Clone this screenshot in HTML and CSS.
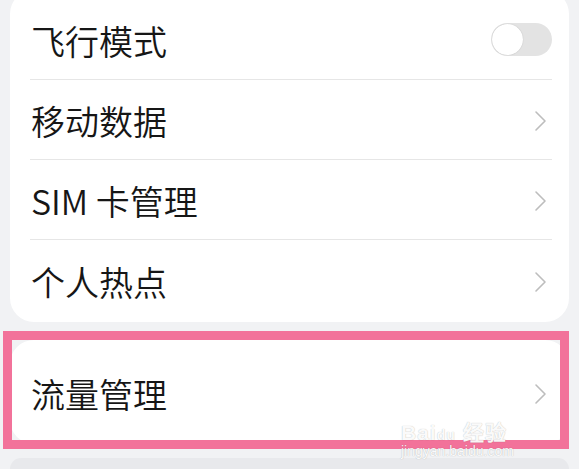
FILE: index.html
```html
<!DOCTYPE html>
<html lang="zh-CN">
<head>
    <meta charset="UTF-8">
    <meta name="viewport" content="width=device-width, initial-scale=1.0">
    <title>移动网络</title>
    <link rel="stylesheet" href="styles.css">
</head>
<body>
<div class="screen">
    <!-- 第一组设置 -->
    <div class="card card-top">
        <div class="row">
            <span class="label">飞行模式</span>
            <span class="switch"><span class="knob"></span></span>
        </div>
        <div class="row">
            <span class="label">移动数据</span>
            <svg class="arrow" viewBox="0 0 14 22"><path d="M2 2 L11 11 L2 20"/></svg>
        </div>
        <div class="row">
            <span class="label">SIM 卡管理</span>
            <svg class="arrow" viewBox="0 0 14 22"><path d="M2 2 L11 11 L2 20"/></svg>
        </div>
        <div class="row">
            <span class="label">个人热点</span>
            <svg class="arrow" viewBox="0 0 14 22"><path d="M2 2 L11 11 L2 20"/></svg>
        </div>
    </div>

    <!-- 流量管理 -->
    <div class="card card-single">
        <div class="row">
            <span class="label">流量管理</span>
            <svg class="arrow" viewBox="0 0 14 22"><path d="M2 2 L11 11 L2 20"/></svg>
        </div>
    </div>

    <div class="card card-next"></div>

    <!-- 标注框 -->
    <div class="highlight"></div>

    <div class="watermark">
        <div class="wm-logo">Bai<span class="wm-du">du</span> 经验</div>
        <div class="wm-url">jingyan.baidu.com</div>
    </div>
</div>
</body>
</html>
```

FILE: styles.css
```css
* {
    margin: 0;
    padding: 0;
    box-sizing: border-box;
}

body {
    font-family: "Noto Sans CJK SC", "Noto Sans", sans-serif;
    background-color: #f1f2f4;
    color: #161616;
    width: 579px;
    height: 469px;
    overflow: hidden;
}

.screen {
    position: relative;
    height: 469px;
    overflow: hidden;
}

/* Cartões */
.card {
    background-color: #fff;
    border-radius: 24px;
    margin: 0 10px;
}

.card-top {
    margin-top: -10px;
    padding: 10px 17px 2px 20px;
}

.card-single {
    margin-top: 18px;
    padding: 12px 17px 12px 20px;
}

.card-next {
    margin-top: 14px;
    height: 11px;
    border-radius: 24px 24px 0 0;
    background-color: #e8e9ec;
}

.row {
    height: 80px;
    display: flex;
    align-items: center;
    justify-content: space-between;
    border-bottom: 1px solid #e6e6e6;
}

.row:last-child {
    border-bottom: none;
}

.label {
    font-size: 34px;
    font-weight: 350;
    padding-left: 1px;
    padding-top: 2px;
}

/* Interruptor */
.switch {
    width: 61px;
    height: 33px;
    border-radius: 17px;
    background-color: #e3e3e3;
    display: flex;
    align-items: center;
    padding-left: 1px;
}

.knob {
    width: 31px;
    height: 31px;
    border-radius: 50%;
    background-color: #fff;
    box-shadow: 0 0 1px rgba(0, 0, 0, 0.25);
}

.arrow {
    width: 14px;
    height: 22px;
    margin-right: 4px;
    margin-top: 3px;
}

.arrow path {
    fill: none;
    stroke: #bdbdbd;
    stroke-width: 1.6;
    stroke-linecap: round;
    stroke-linejoin: round;
}

/* Moldura rosa por cima */
.highlight {
    position: absolute;
    top: 331px;
    left: 3px;
    width: 566px;
    height: 118px;
    border: 9px solid #f2729a;
}

.watermark {
    position: absolute;
    top: 416px;
    left: 401px;
    color: rgba(255, 255, 255, 0.95);
    font-family: "Liberation Sans", sans-serif;
    text-shadow: 0 0 1px rgba(0, 0, 0, 0.3);
}

.wm-logo {
    font-size: 21px;
    font-weight: bold;
    letter-spacing: 1px;
}

.wm-du {
    font-size: 14px;
}

.wm-url {
    font-size: 14px;
    margin-top: -3px;
}
```
